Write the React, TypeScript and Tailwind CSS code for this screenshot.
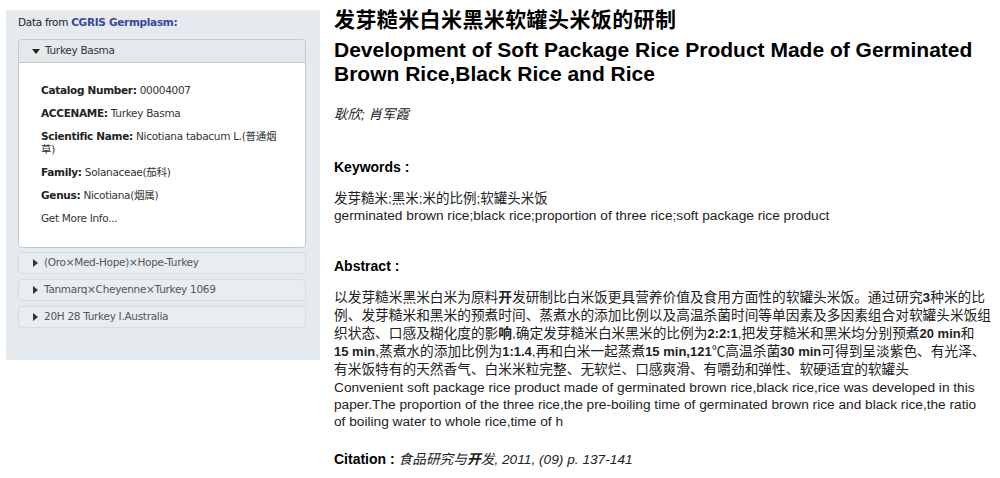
const sans = { fontFamily: '"Liberation Sans", Arial, "Noto Sans CJK SC", sans-serif' }
const verdana = { fontFamily: '"DejaVu Sans", Verdana, "Noto Sans CJK SC", sans-serif' }

const DownArrow = () => (
  <svg width="8" height="5" viewBox="0 0 8 5" className="mr-[5px]">
    <path d="M0 0h8L4 5z" fill="#222" />
  </svg>
)

const RightArrow = () => (
  <svg width="5" height="8" viewBox="0 0 5 8" className="mr-[6px]">
    <path d="M0 0l5 4-5 4z" fill="#333" />
  </svg>
)

const fields = [
  { label: 'Catalog Number:', value: '00004007' },
  { label: 'ACCENAME:', value: 'Turkey Basma' },
  { label: 'Scientific Name:', value: 'Nicotiana tabacum L.(普通烟草)' },
  { label: 'Family:', value: 'Solanaceae(茄科)' },
  { label: 'Genus:', value: 'Nicotiana(烟属)' },
]

const others = [
  '(Oro×Med-Hope)×Hope-Turkey',
  'Tanmarq×Cheyenne×Turkey 1069',
  '20H 28 Turkey I.Australia',
]

function Germplasm() {
  return (
    <div
      className="w-[314px] h-[350px] bg-[#e4eaed] pt-[6px] px-[12px] text-[10.5px] tracking-[-0.3px] text-[#222]"
      style={verdana}
    >
      <div className="h-[13px] leading-[13px] mb-[10px]">
        Data from <span className="font-bold text-[#3a47a0]">CGRIS Germplasm:</span>
      </div>
      <div className="w-[288px] border border-[#c3c8cc] rounded-[4px] bg-white overflow-hidden">
        <div className="h-[23px] flex items-center pl-[13px] bg-[#e4e9ec] border-b border-[#c3c8cc] text-[#333]">
          <DownArrow />
          Turkey Basma
        </div>
        <div className="pl-[22px] pr-[24px] pt-[21px] pb-[22px] flex flex-col gap-[10px] text-[#333]">
          {fields.map((f) => (
            <div key={f.label} className="leading-[13px]">
              <span className="font-bold text-[#222]">{f.label}</span> {f.value}
            </div>
          ))}
          <div className="leading-[13px]">Get More Info...</div>
        </div>
      </div>
      <div className="mt-[4px] flex flex-col gap-[5px]">
        {others.map((o) => (
          <div
            key={o}
            className="w-[288px] h-[22px] flex items-center pl-[14px] bg-[#e8edf0] border border-[#d6dbde] rounded-[4px] text-[#555]"
          >
            <RightArrow />
            {o}
          </div>
        ))}
      </div>
    </div>
  )
}

function Article() {
  return (
    <div className="ml-[14px] w-[662px] text-black -mt-[10px]" style={sans}>
      <h1 className="text-[21px] leading-[28px] font-bold mt-[6px] tracking-[0.4px]">
        发芽糙米白米黑米软罐头米饭的研制
      </h1>
      <h2 className="text-[21px] leading-[24px] font-bold mt-[4px]">
        Development of Soft Package Rice Product Made of Germinated
        <br />
        Brown Rice,Black Rice and Rice
      </h2>
      <div className="italic text-[13.5px] leading-[18px] mt-[20px] text-[#222]">耿欣; 肖军霞</div>

      <div className="font-bold text-[14px] leading-[18px] mt-[34px]">Keywords :</div>
      <div className="text-[13.7px] mt-[14px] text-[#222]">
        <div className="leading-[17px] text-[13.5px]">发芽糙米;黑米;米的比例;软罐头米饭</div>
        <div className="leading-[17px]">
          germinated brown rice;black rice;proportion of three rice;soft package rice product
        </div>
      </div>

      <div className="font-bold text-[14px] leading-[18px] mt-[33px]">Abstract :</div>
      <div className="text-[13.7px] mt-[14px] text-[#222]">
        <div className="leading-[18px] whitespace-nowrap">
          以发芽糙米黑米白米为原料<b>开</b>发研制比白米饭更具营养价值及食用方面性的软罐头米饭。通过研究<b>3</b>种米的比
          <br />
          例、发芽糙米和黑米的预煮时间、蒸煮水的添加比例以及高温杀菌时间等单因素及多因素组合对软罐头米饭组
          <br />
          织状态、口感及糊化度的影<b>响</b>,确定发芽糙米白米黑米的比例为<b className="text-[13px]">2:2:1</b>,把发芽糙米和黑米均分别预煮<b className="text-[13px]">20 min</b>和
          <br />
          <b className="text-[13px]">15 min</b>,蒸煮水的添加比例为<b className="text-[13px]">1:1.4</b>,再和白米一起蒸煮<b className="text-[13px]">15 min,121</b>℃高温杀菌<b className="text-[13px]">30 min</b>可得到呈淡紫色、有光泽、
          <br />
          有米饭特有的天然香气、白米米粒完整、无软烂、口感爽滑、有嚼劲和弹性、软硬适宜的软罐头
        </div>
        <div className="leading-[17px] whitespace-nowrap">
          Convenient soft package rice product made of germinated brown rice,black rice,rice was developed in this
          <br />
          paper.The proportion of the three rice,the pre-boiling time of germinated brown rice and black rice,the ratio
          <br />
          of boiling water to whole rice,time of h
        </div>
      </div>

      <div className="text-[14px] leading-[18px] mt-[20px]">
        <span className="font-bold">Citation : </span>
        <span className="italic text-[13.7px] text-[#222]">
          食品研究与<b>开</b>发, 2011, (09) p. 137-141
        </span>
      </div>
    </div>
  )
}

export default function App() {
  return (
    <div className="w-[1000px] h-[478px] bg-white overflow-hidden flex items-start pl-[6px] pt-[10px]">
      <Germplasm />
      <Article />
    </div>
  )
}
